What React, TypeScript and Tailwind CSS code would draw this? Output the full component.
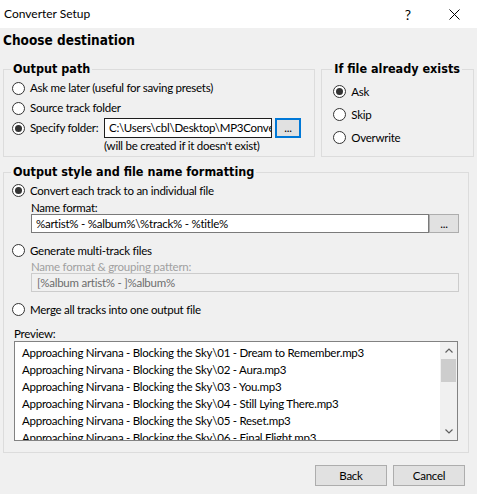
import type { ReactNode } from 'react';

const ui = "font-['Lato',sans-serif] text-[11.5px] tracking-[-0.25px]";
const head = "font-['DejaVu_Sans_Condensed','DejaVu_Sans',sans-serif] font-stretch-condensed font-bold whitespace-nowrap tracking-normal";

function Radio({ checked, label, className = '' }: { checked?: boolean; label: string; className?: string }) {
  return (
    <div className={`flex items-center gap-[5px] whitespace-nowrap ${className}`}>
      <span className="flex h-[13px] w-[13px] shrink-0 items-center justify-center rounded-full border border-[#333] bg-white">
        {checked && <span className="h-[7px] w-[7px] rounded-full bg-[#333]" />}
      </span>
      <span className="leading-none">{label}</span>
    </div>
  );
}

function Group({ title, className = '', children }: { title: string; className?: string; children: ReactNode }) {
  return (
    <fieldset className={`border border-[#dcdcdc] ${className}`}>
      <legend className={`${head} ml-[-1px] px-[2px] text-[12.5px] leading-[16px]`}>{title}</legend>
      {children}
    </fieldset>
  );
}

const tracks = [
  '01 - Dream to Remember.mp3',
  '02 - Aura.mp3',
  '03 - You.mp3',
  '04 - Still Lying There.mp3',
  '05 - Reset.mp3',
  '06 - Final Flight.mp3',
];

export default function App() {
  return (
    <div className={`flex h-[494px] w-[477px] flex-col bg-[#f0f0f0] text-black ${ui}`}>
      {/* title bar */}
      <div className="flex h-[28px] items-center bg-white pl-[4px] text-[12px] tracking-normal">
        <span className="flex-1">Converter Setup</span>
        <span className="w-[46px] text-center text-[14px]">?</span>
        <span className="flex w-[46px] items-center justify-center">
          <svg width="11" height="11" viewBox="0 0 11 11" stroke="#000" strokeWidth="1">
            <path d="M0.5 0.5 10.5 10.5 M10.5 0.5 0.5 10.5" />
          </svg>
        </span>
      </div>

      <h1 className={`${head} px-[3px] pt-[3px] text-[13.5px] leading-[18px]`}>Choose destination</h1>

      <div className="mt-[12px] flex gap-[6px] px-[3px]">
        <Group title="Output path" className="h-[96px] w-[317px] px-[8px]">
          <div className="flex flex-col pt-[1px]">
            <Radio label="Ask me later (useful for saving presets)" className="h-[20px]" />
            <Radio label="Source track folder" className="h-[20px]" />
            <div className="flex h-[20px] items-center">
              <Radio checked label="Specify folder:" className="w-[92px]" />
              <div className="flex h-[20px] w-[168px] items-center overflow-hidden whitespace-nowrap border border-[#1e1e1e] bg-white px-[4px]">
                C:\Users\cbl\Desktop\MP3Converter
              </div>
              <button className="ml-[3px] h-[20px] w-[26px] border-2 border-[#0078d7] bg-[#e1e1e1] leading-none">...</button>
            </div>
            <div className="pl-[92px] pt-[1px] leading-[14px] whitespace-nowrap">(will be created if it doesn't exist)</div>
          </div>
        </Group>

        <Group title="If file already exists" className="h-[96px] w-[143px] px-[11px]">
          <div className="flex flex-col pt-[3px]">
            <Radio checked label="Ask" className="h-[23px]" />
            <Radio label="Skip" className="h-[23px]" />
            <Radio label="Overwrite" className="h-[23px]" />
          </div>
        </Group>
      </div>

      <div className="mt-[7px] px-[3px]">
        <Group title="Output style and file name formatting" className="h-[289px] w-[466px] pl-[8px] pr-[9px]">
          <div className="flex flex-col pt-[1px]">
            <Radio checked label="Convert each track to an individual file" className="h-[19px]" />
            <div className="pl-[19px] pt-[1px] leading-[13px]">Name format:</div>
            <div className="flex pl-[19px]">
              <div className="flex h-[19px] flex-1 items-center border border-[#7a7a7a] bg-white px-[4px]">
                %artist% - %album%\%track% - %title%
              </div>
              <button className="h-[19px] w-[30px] border border-[#adadad] bg-[#e1e1e1] leading-none">...</button>
            </div>
            <Radio label="Generate multi-track files" className="mt-[8px] h-[19px]" />
            <div className="pl-[19px] pt-[1px] leading-[12px] text-[#a0a0a0]">Name format &amp; grouping pattern:</div>
            <div className="pl-[19px]">
              <div className="flex h-[19px] items-center border border-[#cccccc] px-[5px] text-[#6d6d6d]">
                [%album artist% - ]%album%
              </div>
            </div>
            <Radio label="Merge all tracks into one output file" className="mt-[8px] h-[19px]" />
            <div className="pl-[2px] pt-[8px] leading-[14px]">Preview:</div>
            <div className="ml-[2px] mr-[1px] flex h-[100px] border border-[#828282] bg-white">
              <div className="flex-1 overflow-hidden pl-[7px] pt-[2px]">
                {tracks.map((t) => (
                  <div key={t} className="h-[17px] whitespace-nowrap leading-[17px]">
                    Approaching Nirvana - Blocking the Sky\{t}
                  </div>
                ))}
              </div>
              <div className="flex w-[17px] flex-col items-center bg-[#f0f0f0]">
                <div className="flex h-[17px] items-center">
                  <svg width="8" height="5" viewBox="0 0 8 5" fill="none" stroke="#606060" strokeWidth="1.2">
                    <path d="M0.5 4.5 4 1 7.5 4.5" />
                  </svg>
                </div>
                <div className="h-[23px] w-[15px] bg-[#cdcdcd]" />
                <div className="flex-1" />
                <div className="flex h-[17px] items-center">
                  <svg width="8" height="5" viewBox="0 0 8 5" fill="none" stroke="#606060" strokeWidth="1.2">
                    <path d="M0.5 0.5 4 4 7.5 0.5" />
                  </svg>
                </div>
              </div>
            </div>
          </div>
        </Group>
      </div>

      <div className="mt-[12px] flex justify-end gap-[6px] pr-[12px]">
        <button className="h-[21px] w-[72px] border border-[#adadad] bg-[#e1e1e1]">Back</button>
        <button className="h-[21px] w-[72px] border border-[#adadad] bg-[#e1e1e1]">Cancel</button>
      </div>
    </div>
  );
}
